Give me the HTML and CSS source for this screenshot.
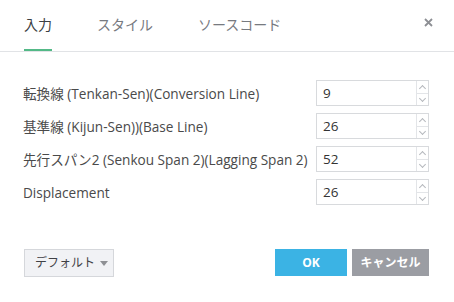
FILE: index.html
```html
<!DOCTYPE html>
<html lang="ja">
<head>
<meta charset="utf-8">
<link rel="stylesheet" href="styles.css">
</head>
<body>
<div class="dialog">
  <div class="header">
    <div class="tab active">入力</div>
    <div class="tab">スタイル</div>
    <div class="tab">ソースコード</div>
    <div class="close">
      <svg width="9" height="9" viewBox="0 0 9 9"><path d="M1 1L8 8M8 1L1 8" stroke="#8d8f94" stroke-width="1.8"/></svg>
    </div>
  </div>
  <div class="form">
    <div class="label">転換線 (Tenkan-Sen)(Conversion Line)</div>
    <div class="spin"><span class="val">9</span><span class="arrows"><span class="up"></span><span class="down"></span></span></div>
    <div class="label">基準線 (Kijun-Sen))(Base Line)</div>
    <div class="spin"><span class="val">26</span><span class="arrows"><span class="up"></span><span class="down"></span></span></div>
    <div class="label">先行スパン2 (Senkou Span 2)(Lagging Span 2)</div>
    <div class="spin"><span class="val">52</span><span class="arrows"><span class="up"></span><span class="down"></span></span></div>
    <div class="label">Displacement</div>
    <div class="spin"><span class="val">26</span><span class="arrows"><span class="up"></span><span class="down"></span></span></div>
  </div>
  <div class="footer">
    <div class="default">デフォルト<span class="caret"></span></div>
    <div class="actions">
      <div class="btn ok">OK</div>
      <div class="btn cancel">キャンセル</div>
    </div>
  </div>
</div>
</body>
</html>
```
FILE: styles.css
```css
html, body {
  margin: 0;
  padding: 0;
  background: #fff;
}
body {
  font-family: "Open Sans", "Noto Sans CJK JP", sans-serif;
  color: #4a4a4a;
  width: 454px;
  height: 302px;
  overflow: hidden;
}
.header {
  display: flex;
  align-items: flex-start;
  height: 51px;
  border-bottom: 1px solid #e1e3e6;
  padding-left: 24px;
  padding-right: 21px;
}
.tab {
  height: 49px;
  line-height: 49px;
  font-size: 14px;
  color: #777a7f;
  border-bottom: 2px solid transparent;
  margin-right: 45px;
  white-space: nowrap;
}
.tab.active {
  color: #3c3f44;
  border-bottom-color: #53b987;
}
.close {
  margin-left: auto;
  margin-top: 18px;
  width: 9px;
  height: 9px;
  display: flex;
}
.form {
  display: grid;
  grid-template-columns: 1fr 113px;
  row-gap: 7px;
  padding: 28px 25px 0 23px;
  align-items: center;
}
.label {
  font-size: 13.6px;
  color: #4a4a4a;
  white-space: nowrap;
}
.spin {
  height: 24px;
  border: 1px solid #d8dadd;
  display: flex;
  box-sizing: content-box;
}
.val {
  flex: 1;
  font-size: 13.5px;
  line-height: 24px;
  padding-left: 6px;
  color: #333;
}
.arrows {
  width: 11px;
  border-left: 1px solid #e3e5e8;
  display: flex;
  flex-direction: column;
}
.up, .down {
  flex: 1;
  position: relative;
}
.up {
  border-bottom: 1px solid #e3e5e8;
}
.up::after, .down::after {
  content: "";
  position: absolute;
  left: 3px;
  width: 4px;
  height: 4px;
  border-left: 1px solid #b5b8bd;
  border-top: 1px solid #b5b8bd;
}
.up::after {
  top: 5px;
  transform: rotate(45deg);
}
.down::after {
  top: 2px;
  transform: rotate(-135deg);
}
.footer {
  display: flex;
  justify-content: space-between;
  align-items: flex-start;
  padding: 44px 25px 0 24px;
}
.default {
  width: 78px;
  height: 26px;
  border: 1px solid #d5d7db;
  background: #f1f2f5;
  box-sizing: content-box;
  font-size: 12px;
  line-height: 26px;
  color: #3f4145;
  display: flex;
  align-items: center;
  padding-left: 10px;
  gap: 5px;
}
.caret {
  width: 0;
  height: 0;
  border-left: 4.5px solid transparent;
  border-right: 4.5px solid transparent;
  border-top: 5px solid #8e9094;
}
.actions {
  display: flex;
  gap: 5px;
}
.btn {
  height: 27px;
  line-height: 27px;
  text-align: center;
  color: #fff;
  font-weight: bold;
  font-size: 12px;
}
.ok {
  width: 72px;
  background: #3bb3e4;
}
.cancel {
  width: 77px;
  background: #9b9da3;
}
```
